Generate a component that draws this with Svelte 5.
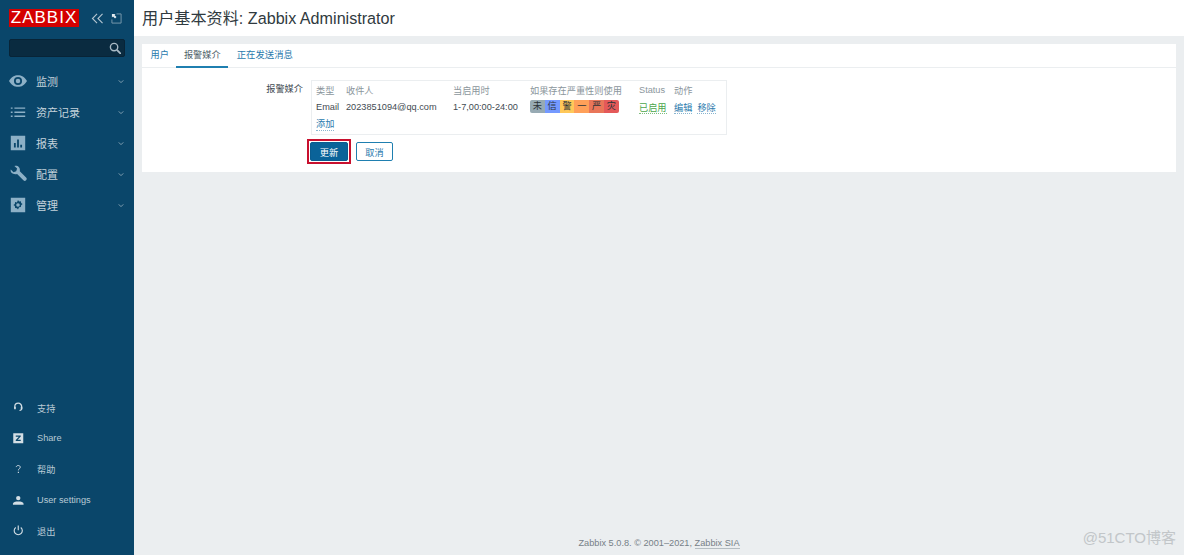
<script>
  const menu = [
    { label: '监测', icon: 'eye' },
    { label: '资产记录', icon: 'list' },
    { label: '报表', icon: 'chart' },
    { label: '配置', icon: 'wrench' },
    { label: '管理', icon: 'gear' },
  ]
  const bottom = [
    { label: '支持', icon: 'support' },
    { label: 'Share', icon: 'share' },
    { label: '帮助', icon: 'help' },
    { label: 'User settings', icon: 'user' },
    { label: '退出', icon: 'power' },
  ]
  const severities = [
    { t: '未', c: '#97aab3' },
    { t: '信', c: '#7499ff' },
    { t: '警', c: '#ffc859' },
    { t: '一', c: '#ffa059' },
    { t: '严', c: '#e97659' },
    { t: '灾', c: '#e45959' },
  ]
</script>

{#snippet icon(name)}
  <svg viewBox="0 0 20 20" width="18" height="18" aria-hidden="true">
    {#if name === 'eye'}
      <path fill-rule="evenodd" d="M0 10C3 5 6 3.500 10 3.500S17 5 20 10c-3 5-6 6.500-10 6.500S3 15 0 10zm10 4.500a4.500 4.500 0 1 0 0-9 4.500 4.500 0 0 0 0 9zm0-2a2.500 2.500 0 1 1 0-5 2.500 2.500 0 0 1 0 5z" fill="currentColor"/>
    {:else if name === 'list'}
      <path d="M2 5h2v1.500H2zM6 5h12v1.500H6zM2 9.500h2V11H2zM6 9.500h12V11H6zM2 14h2v1.500H2zM6 14h12v1.500H6z" fill="currentColor"/>
    {:else if name === 'chart'}
      <path fill-rule="evenodd" d="M2 2h16v16H2zM5.500 10v5H7.500v-5zM9 6v9h2V6zM12.500 12v3h2v-3z" fill="currentColor"/>
    {:else if name === 'wrench'}
      <path d="M2 5l3 3 3-1 1-3-3-3c3-1 7 1 6 6l7 7c1 1 1 2 0 3s-2 1-3 0l-7-7C4 11 1 8 2 5z" fill="currentColor"/>
    {:else if name === 'gear'}
      <path fill-rule="evenodd" d="M2 2h16v16H2zM10 4.500l1.200 1.600 2-.3.3 2 1.600 1.200-1.600 1.200-.3 2-2 .3L10 15.100l-1.200-1.600-2-.3-.3-2L4.900 10l1.600-1.200.3-2 2 .3zM10 8a2 2 0 1 0 0 4 2 2 0 0 0 0-4z" fill="currentColor"/>
    {:else if name === 'support'}
      <path d="M4.500 12V9a5.500 5.500 0 0 1 11 0v3c0 2-1.500 3-3.500 3.200" fill="none" stroke="currentColor" stroke-width="2"/>
      <path d="M3.500 9h2.500v4H3.500zM14 9h2.500v4H14z" fill="currentColor"/>
    {:else if name === 'share'}
      <path fill-rule="evenodd" d="M2 2h16v16H2zM6 5.500v2h5L6 12.800V14.500h8v-2H9l5-5.300V5.500z" fill="currentColor"/>
    {:else if name === 'help'}
      <path d="M6.800 6.500C7 4.800 8.300 4 10 4c1.900 0 3.200 1.100 3.200 2.700 0 2.400-3 2.500-3 5.100" fill="none" stroke="currentColor" stroke-width="1.500"/>
      <path d="M9.300 14h1.800v2H9.300z" fill="currentColor"/>
    {:else if name === 'user'}
      <circle cx="10" cy="6.500" r="3.500" fill="currentColor"/>
      <path d="M1.500 17v-1.500c0-2.500 4-3.500 8.500-3.500s8.500 1 8.500 3.500V17z" fill="currentColor"/>
    {:else if name === 'power'}
      <path d="M6 5.500a6.500 6.500 0 1 0 8 0" fill="none" stroke="currentColor" stroke-width="1.800"/>
      <path d="M9.100 2.500h1.800v7.500H9.100z" fill="currentColor"/>
    {/if}
  </svg>
{/snippet}

<div class="page">
  <aside class="sidebar">
    <div class="brand">
      <span class="logo">ZABBIX</span>
      <div class="brand-tools">
        <svg viewBox="0 0 14 12" width="13" height="11" aria-hidden="true"><path d="M6.500 1L1.500 6l5 5M12.500 1l-5 5 5 5" fill="none" stroke="currentColor" stroke-width="1.200"/></svg>
        <svg viewBox="0 0 12 12" width="11" height="11" aria-hidden="true"><path d="M6 1h5v10H1V7" fill="none" stroke="#7f9db0" stroke-width="1"/><path d="M1 1h4L3.800 2.200 6 4.400 4.400 6 2.200 3.800 1 5z" fill="#e4ebf0"/></svg>
      </div>
    </div>
    <div class="search">
      <svg viewBox="0 0 13 13" width="12" height="12" aria-hidden="true"><circle cx="5.500" cy="5.500" r="4" fill="none" stroke="currentColor" stroke-width="1.500"/><path d="M8.500 8.500l4.500 4.500" stroke="currentColor" stroke-width="2"/></svg>
    </div>
    <nav class="menu">
      {#each menu as item}
        <div class="menu-item">
          <span class="menu-icon">{@render icon(item.icon)}</span>
          <span class="menu-label">{item.label}</span>
          <svg class="chev" viewBox="0 0 8 6" width="6" height="5" aria-hidden="true"><path d="M1 1.500l3 3 3-3" fill="none" stroke="currentColor" stroke-width="1.200"/></svg>
        </div>
      {/each}
    </nav>
    <nav class="bottom">
      {#each bottom as item}
        <div class="bottom-item">
          <span class="bottom-icon">{@render icon(item.icon)}</span>
          <span>{item.label}</span>
        </div>
      {/each}
    </nav>
  </aside>

  <main class="main">
    <header class="top"><h1>用户基本资料: Zabbix Administrator</h1></header>
    <section class="panel">
      <div class="tabs">
        <span class="tab">用户</span>
        <span class="tab active">报警媒介</span>
        <span class="tab last">正在发送消息</span>
      </div>
      <div class="form">
        <div class="form-label">报警媒介</div>
        <div class="form-body">
          <div class="media">
            <table>
              <thead>
                <tr>
                  <th class="c1">类型</th>
                  <th class="c2">收件人</th>
                  <th class="c3">当启用时</th>
                  <th class="c4">如果存在严重性则使用</th>
                  <th class="c5">Status</th>
                  <th>动作</th>
                </tr>
              </thead>
              <tbody>
                <tr>
                  <td>Email</td>
                  <td>2023851094@qq.com</td>
                  <td>1-7,00:00-24:00</td>
                  <td>
                    <div class="sev">
                      {#each severities as s}
                        <span style="background: {s.c}">{s.t}</span>
                      {/each}
                    </div>
                  </td>
                  <td><span class="link green">已启用</span></td>
                  <td class="actions"><span class="link">编辑</span><span class="link">移除</span></td>
                </tr>
              </tbody>
            </table>
            <span class="link add">添加</span>
          </div>
          <div class="buttons">
            <span class="highlight"><button class="primary" type="button">更新</button></span>
            <button class="secondary" type="button">取消</button>
          </div>
        </div>
      </div>
    </section>
    <footer class="foot">Zabbix 5.0.8. © 2001–2021, <span class="foot-link">Zabbix SIA</span></footer>
    <div class="watermark">@51CTO博客</div>
  </main>
</div>

<style>
  :global(body) {
    margin: 0;
    background: #ebeef0;
  }
  .page {
    display: flex;
    height: 555px;
    overflow: hidden;
    font-family: "Liberation Sans", "Noto Sans CJK SC", sans-serif;
    font-size: 9.200px;
    color: #1f2c33;
  }
  .sidebar {
    width: 134px;
    flex: none;
    background: #0a466a;
    color: #c4d2db;
    display: flex;
    flex-direction: column;
    box-sizing: border-box;
    padding: 9px 9px 0;
  }
  .brand {
    display: flex;
    align-items: center;
    justify-content: space-between;
    height: 18px;
    padding-right: 3px;
  }
  .logo {
    width: 70px;
    height: 18px;
    line-height: 18px;
    background: #d40000;
    color: #fff;
    text-align: center;
    font-size: 17px;
    letter-spacing: 1px;
  }
  .brand-tools {
    display: flex;
    align-items: center;
    gap: 7px;
    color: #b5c6d1;
  }
  .search {
    margin-top: 12px;
    height: 18px;
    background: #0a2b40;
    border: 1px solid #082437;
    border-radius: 2px;
    box-sizing: border-box;
    display: flex;
    align-items: center;
    justify-content: flex-end;
    padding-right: 3px;
    color: #a9bac5;
  }
  .menu {
    margin-top: 8px;
  }
  .menu-item {
    height: 31px;
    display: flex;
    align-items: center;
    font-size: 11px;
  }
  .menu-icon {
    width: 27px;
    color: #8db0c6;
    display: flex;
  }
  .menu-label {
    flex: 1;
  }
  .chev {
    margin: 2px 1px 0 0;
    color: #8fa9b9;
  }
  .bottom {
    margin-top: auto;
    margin-bottom: 9px;
  }
  .bottom-item {
    height: 30.750px;
    display: flex;
    align-items: center;
    font-size: 9.200px;
    color: #b9cad5;
  }
  .bottom-icon {
    width: 28px;
    display: flex;
    padding-left: 3px;
    box-sizing: border-box;
    color: #d3dee5;
  }
  .bottom-icon svg {
    width: 12.500px;
    height: 12.500px;
  }
  .main {
    flex: 1;
    display: flex;
    flex-direction: column;
    position: relative;
    min-width: 0;
  }
  .top {
    height: 36px;
    box-sizing: border-box;
    padding: 0 0 3px 8px;
    background: #fff;
    display: flex;
    align-items: center;
  }
  h1 {
    margin: 0;
    font-size: 16.150px;
    font-weight: 400;
    color: #303a40;
  }
  .panel {
    margin: 8px 8px 0;
    height: 128px;
    background: #fff;
  }
  .tabs {
    height: 23px;
    border-bottom: 1px solid #ebeef0;
    display: flex;
    padding-left: 1px;
  }
  .tab {
    padding: 0 7.500px;
    line-height: 22px;
    color: #2a7aad;
    height: 24px;
    box-sizing: border-box;
  }
  .tab.active {
    color: #4f5f68;
    border-bottom: 2px solid #1f7fb0;
  }
  .tab.last {
    font-size: 9.400px;
    margin-left: 1px;
  }
  .form {
    display: flex;
    margin-top: 12px;
  }
  .form-label {
    width: 161px;
    text-align: right;
    flex: none;
    padding-top: 1px;
    color: #3f4b52;
  }
  .form-body {
    margin-left: 8px;
  }
  .media {
    width: 416px;
    height: 55px;
    box-sizing: border-box;
    border: 1px solid #ebeef0;
    padding: 0 4px;
  }
  table {
    border-collapse: collapse;
  }
  th,
  td {
    padding: 0;
    height: 17px;
    text-align: left;
    font-weight: 400;
    white-space: nowrap;
    color: #3f4b52;
  }
  th {
    color: #8b969c;
  }
  .c1 { width: 30px; }
  .c2 { width: 107px; }
  .c3 { width: 77px; }
  .c4 { width: 109px; }
  .c5 { width: 35px; }
  .sev {
    display: inline-flex;
    border-radius: 2px;
    overflow: hidden;
    vertical-align: middle;
  }
  .sev span {
    width: 14.800px;
    height: 13px;
    line-height: 13px;
    text-align: center;
    color: #2b3338;
  }
  .link {
    color: #2a7aad;
    border-bottom: 1px dotted #8ab6d0;
  }
  .link.green {
    color: #4ba64b;
    border-bottom-color: #7fbd7f;
  }
  .actions .link + .link {
    margin-left: 5px;
  }
  .add {
    display: inline-block;
    margin-top: 3px;
    line-height: 12px;
  }
  .buttons {
    display: flex;
    align-items: center;
    gap: 5px;
    margin-top: 4px;
    margin-left: -4px;
  }
  .highlight {
    display: flex;
    border: 2px solid #c8102e;
    padding: 1px;
    background: #fff;
  }
  button {
    font: inherit;
    height: 19px;
    padding: 0;
    border-radius: 2px;
    box-sizing: border-box;
  }
  .primary {
    width: 38px;
    background: #0a6399;
    border: 1px solid #0a5c8f;
    color: #fff;
  }
  .secondary {
    width: 37px;
    background: #fff;
    border: 1px solid #1f7fb0;
    color: #2a7aad;
  }
  .foot {
    margin-top: auto;
    height: 24px;
    text-align: center;
    color: #768087;
    font-size: 9.200px;
    line-height: 24px;
  }
  .foot-link {
    border-bottom: 1px solid #b5bdc2;
  }
  .watermark {
    position: absolute;
    right: 8px;
    bottom: 7px;
    font-size: 15px;
    color: #c2c6c9;
    line-height: 20px;
  }
</style>
